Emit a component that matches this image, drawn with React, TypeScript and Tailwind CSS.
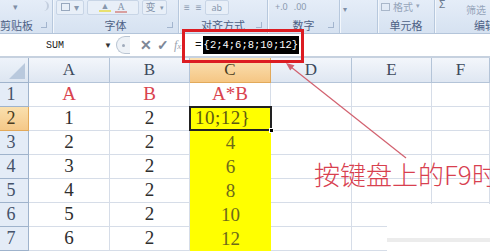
import React from "react";

const serif = "font-['Liberation_Serif','Noto_Sans_CJK_SC',serif]";
const cjk = "font-['Noto_Sans_CJK_SC',sans-serif]";

type Cell = { t: string; cls?: string };

const rows: { n: string; a: Cell; b: Cell; c: Cell }[] = [
  { n: "1", a: { t: "A", cls: "text-[#d9434e]" }, b: { t: "B", cls: "text-[#d9434e]" }, c: { t: "A*B", cls: "text-[#d9434e]" } },
  { n: "2", a: { t: "1" }, b: { t: "2" }, c: { t: "10;12}" } },
  { n: "3", a: { t: "2" }, b: { t: "2" }, c: { t: "4" } },
  { n: "4", a: { t: "3" }, b: { t: "2" }, c: { t: "6" } },
  { n: "5", a: { t: "4" }, b: { t: "2" }, c: { t: "8" } },
  { n: "6", a: { t: "5" }, b: { t: "2" }, c: { t: "10" } },
  { n: "7", a: { t: "6" }, b: { t: "2" }, c: { t: "12" } },
];

function Group({ w, label, launcher, children, justify = "justify-center" }: { w: string; label: string; launcher?: boolean; children?: React.ReactNode; justify?: string }) {
  return (
    <div className={`${w} h-full flex flex-col border-r border-[#b7c8dd] shadow-[1px_0_0_#f3f7fc] shrink-0`}>
      <div className="h-[19px] flex items-center gap-[3px] px-[3px] overflow-hidden">{children}</div>
      <div className={`h-[15px] flex items-center ${justify} relative text-[11px] text-[#4d6185] ${cjk} leading-none`}>
        <span>{label}</span>
        {launcher && <span className="absolute right-[5px] top-[4px] w-[6px] h-[6px] border-r border-b border-[#8da2bf] opacity-70" />}
      </div>
    </div>
  );
}

function Btn({ w, children }: { w: string; children?: React.ReactNode }) {
  return (
    <div className={`${w} h-[15px] mt-[-4px] rounded-[2px] border border-[#c8d5e6] bg-[#e8eff8] flex items-center justify-center gap-[4px] text-[10px] text-[#8797ad] leading-none overflow-hidden`}>
      {children}
    </div>
  );
}

export default function App() {
  return (
    <div className="relative w-[490px] h-[251px] overflow-hidden bg-white">
      {/* Ribbon */}
      <div className="h-[34px] flex bg-gradient-to-b from-[#e5edf8] to-[#d6e2f1] border-b border-[#b4c5da]">
        <Group w="w-[53px]" label="剪贴板" launcher justify="justify-start">
          <span className="text-[9px] text-[#7e8ea6] ml-[10px] mt-[-4px]">▾</span>
          <span className="ml-auto mt-[-6px] w-[8px] h-[10px] border-r-2 border-[#c3cede] rounded-r-full" />
        </Group>
        <Group w="w-[126px]" label="字体" launcher>
          <Btn w="w-[28px]">
            <span className="w-[9px] h-[8px] border border-[#98a8be]" />
            <span>▾</span>
          </Btn>
          <Btn w="w-[52px]">
            <span className="flex flex-col items-center"><span className="text-[9px] leading-[8px]">▲</span><span className="w-[12px] h-[2px] bg-[#e8e070]" /></span>
            <span className={`${serif} flex flex-col items-center`}><span className="text-[10px] leading-[9px]">A</span><span className="w-[12px] h-[2px] bg-[#d9a0a0]" /></span>
          </Btn>
          <Btn w="w-[25px]">
            <span className={`${cjk} text-[10px]`}>变</span>
            <span className="text-[7px]">▾</span>
          </Btn>
        </Group>
        <Group w="w-[89px]" label="对齐方式" launcher>
          <div className="mt-[-4px] ml-[2px] flex gap-[6px] text-[10px] text-[#8a9ab0]">
            <span>≡</span><span>≡</span>
          </div>
          <Btn w="w-[24px]"><span className="text-[9px]">ab</span></Btn>
        </Group>
        <Group w="w-[72px]" label="数字" launcher>
          <div className="mt-[-4px] ml-[4px] flex gap-[6px] text-[9px] text-[#8a9ab0]">
            <span>+.0</span><span>.00</span>
          </div>
        </Group>
        <Group w="w-[38px]" label="">
          <span className="text-[8px] text-[#7e8ea6]">▾</span>
        </Group>
        <Group w="w-[57px]" label="单元格">
          <div className="mt-[-5px] flex items-center gap-[3px] text-[10px] text-[#96a5ba]">
            <span className="w-[9px] h-[8px] border border-[#a9b7ca]" />
            <span className={cjk}>格式</span>
            <span className="text-[7px]">▾</span>
          </div>
        </Group>
        <div className="flex-1 h-full flex flex-col">
          <div className="h-[19px] flex items-start gap-[10px] px-[4px]">
            <span className="text-[11px] text-[#6b7a90] leading-none mt-[-2px]">Σ</span>
            <span className={`${cjk} text-[10px] text-[#96a5ba] leading-none mt-[5px] ml-auto`}>筛选</span>
          </div>
          <div className={`h-[15px] flex items-center justify-end text-[11px] text-[#4d6185] ${cjk} leading-none mr-[-6px]`}>
            <span>编辑</span>
          </div>
        </div>
      </div>

      {/* Formula bar */}
      <div className="h-[24px] flex items-center bg-white border-b-[2px] border-[#c6d1df]">
        <div className="w-[104px] h-full flex items-center justify-center pl-[6px] font-['Liberation_Mono',monospace] text-[10px] text-[#222]">SUM</div>
        <span className="text-[8px] text-[#333] w-[12px]">▼</span>
        <div className="w-[14px] h-[18px] rounded-l-full border border-r-0 border-[#b9c4d2] bg-[#eef2f7] flex items-center justify-center">
          <span className="w-[3px] h-[3px] rounded-full bg-[#a0abbb]" />
        </div>
        <div className="w-[52px] h-full flex items-center gap-[5px] pl-[10px] text-[#7d8797]">
          <span className="text-[14px] font-bold leading-none">✕</span>
          <span className="text-[14px] font-bold leading-none">✓</span>
          <span className={`${serif} italic text-[12px] leading-none text-[#9aa3b0]`}>f<span className="text-[9px]">x</span></span>
        </div>
        <div className="flex-1 h-full flex items-center pl-[13px]">
          <span className="font-['Liberation_Mono',monospace] text-[11px] text-[#111] mr-[1px]">=</span>
          <span className="bg-black text-white font-['Liberation_Mono',monospace] text-[10.5px] leading-[18px] px-[1px]">{"{2;4;6;8;10;12}"}</span>
        </div>
      </div>

      {/* Grid */}
      <div className={`grid grid-cols-[29px_81px_80px_81px_81px_80px_1fr] grid-rows-[25px_repeat(7,24px)] ${serif}`}>
        <div className="relative bg-gradient-to-b from-[#eef3fa] to-[#dde6f1] border-r border-b border-[#9fb3cc] overflow-hidden">
          <div className="absolute right-[3px] bottom-[3px] w-0 h-0 border-l-[16px] border-l-transparent border-b-[16px] border-b-[#b9c9dd]" />
        </div>
        {["A", "B", "C", "D", "E", "F"].map((h) => (
          <div
            key={h}
            className={`flex items-center justify-center text-[17px] border-r border-b ${
              h === "C"
                ? "bg-gradient-to-b from-[#fae2b4] to-[#f5c684] border-[#e2a95a] text-[#4a3c20]"
                : "bg-gradient-to-b from-[#f3f6fb] to-[#dfe7f2] border-[#b4c4d8] text-[#3d4a5c]"
            }`}
          >
            {h}
          </div>
        ))}
        {rows.map((r, i) => (
          <React.Fragment key={r.n}>
            <div
              className={`flex items-center justify-center pr-[6px] text-[18px] border-r border-b ${
                r.n === "2"
                  ? "bg-gradient-to-b from-[#fae0ae] to-[#f5c888] border-[#e2a95a] text-[#4a3c20]"
                  : "bg-[#e4ecf7] border-[#9fb3cc] text-[#44526a]"
              }`}
            >
              {r.n}
            </div>
            <div className={`flex items-center justify-center text-[19px] border-r border-b border-[#d6dde8] ${r.a.cls ?? "text-[#2e2e2e]"}`}>{r.a.t}</div>
            <div className={`flex items-center justify-center text-[19px] border-r border-b border-[#d6dde8] ${r.b.cls ?? "text-[#2e2e2e]"}`}>{r.b.t}</div>
            {i === 0 ? (
              <div className="flex items-center justify-center text-[19px] border-r border-b border-[#d6dde8] text-[#d9434e]">{r.c.t}</div>
            ) : i === 1 ? (
              <div className="relative flex items-center justify-start pl-[5px] text-[19px] bg-[#ffff00] text-[#5d5a12] border-b border-[#e8e800]">
                <span className="tracking-[0.5px]">{r.c.t}</span>
                <div className="absolute inset-[-1px] border-2 border-[#222]" />
                <div className="absolute right-[-3px] bottom-[-3px] w-[5px] h-[5px] bg-black border border-white" />
              </div>
            ) : (
              <div className="flex items-center justify-center text-[19px] bg-[#ffff00] text-[#6d6a1c]">{r.c.t}</div>
            )}
            <div className="border-r border-b border-[#d6dde8]" />
            <div className="border-r border-b border-[#d6dde8]" />
            <div className="border-r border-b border-[#d6dde8]" />
          </React.Fragment>
        ))}
      </div>

      {/* bottom-right artifact */}
      <div className="absolute left-[387px] top-[204px] w-[103px] h-[47px] bg-white">
        <div className="absolute left-0 right-0 top-[34px] h-[4px] bg-[#ececec]" />
      </div>

      {/* Red highlight box */}
      <div className="absolute left-[182px] top-[29px] w-[122px] h-[34px] border-[3px] border-[#dc1c22]" />

      {/* Arrow */}
      <svg className="absolute left-0 top-0 pointer-events-none" width="490" height="251" viewBox="0 0 490 251">
        <line x1="406" y1="158" x2="291" y2="67" stroke="#d2616f" strokeWidth="1.2" />
        <polygon points="286,63 294.5,65.3 290.2,70.6" fill="#d2616f" />
      </svg>

      {/* Annotation */}
      <div className={`absolute left-[314px] top-[157px] whitespace-nowrap text-[26px] leading-[34px] font-light text-[#d8404f] ${cjk}`}>
        按键盘上的F9时
      </div>
    </div>
  );
}
